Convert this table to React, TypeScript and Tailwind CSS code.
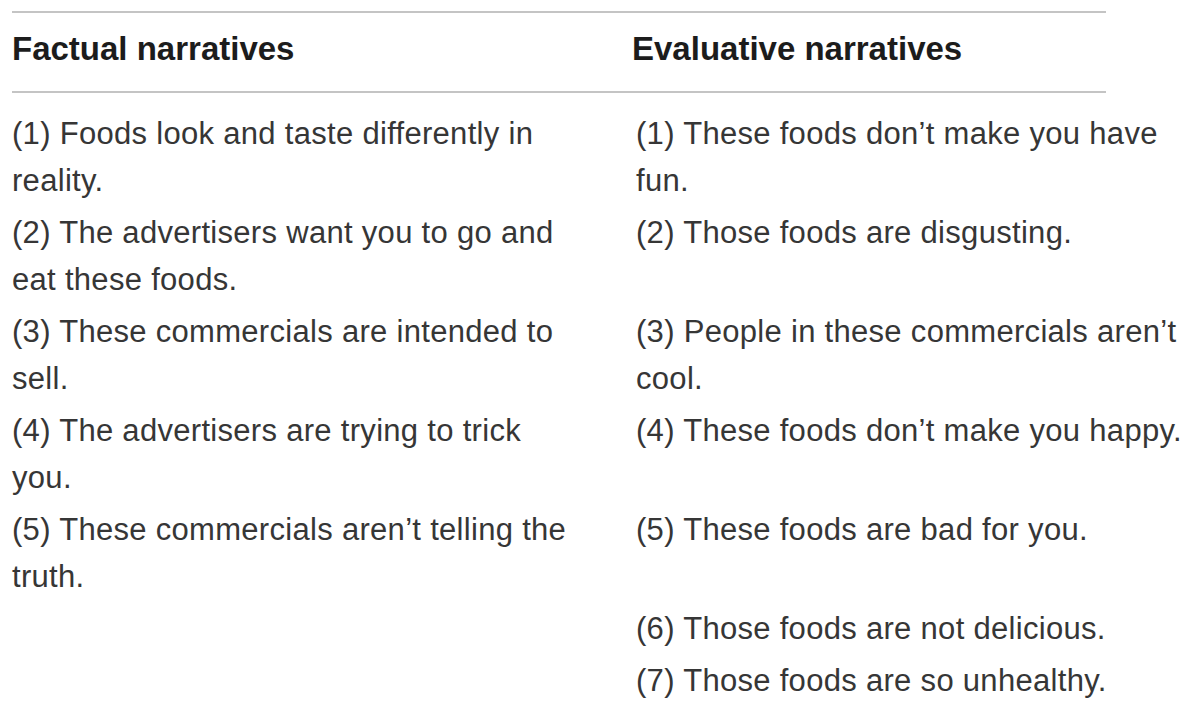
import React from 'react';

type Row = { left: string[]; right: string[] };

const rows: Row[] = [
  {
    left: ['(1) Foods look and taste differently in', 'reality.'],
    right: ['(1) These foods don’t make you have', 'fun.'],
  },
  {
    left: ['(2) The advertisers want you to go and', 'eat these foods.'],
    right: ['(2) Those foods are disgusting.'],
  },
  {
    left: ['(3) These commercials are intended to', 'sell.'],
    right: ['(3) People in these commercials aren’t', 'cool.'],
  },
  {
    left: ['(4) The advertisers are trying to trick', 'you.'],
    right: ['(4) These foods don’t make you happy.'],
  },
  {
    left: ['(5) These commercials aren’t telling the', 'truth.'],
    right: ['(5) These foods are bad for you.'],
  },
  { left: [], right: ['(6) Those foods are not delicious.'] },
  { left: [], right: ['(7) Those foods are so unhealthy.'] },
];

const Cell = ({ lines }: { lines: string[] }) => (
  <div className="whitespace-nowrap">
    {lines.map((l, i) => (
      <div key={i}>{l}</div>
    ))}
  </div>
);

export default function App() {
  return (
    <div className="w-[1200px] h-[711px] bg-white overflow-hidden pt-[11px] pl-[12px] font-['Liberation_Sans',Arial,sans-serif]">
      <div className="w-[1094px]">
        {/* Header */}
        <div className="flex border-t-2 border-b-2 border-[#c4c4c4] pt-[16px] pb-[22px] text-[33px] leading-[40px] font-bold text-[#1c1c1c]">
          <div className="w-[620px] shrink-0">Factual narratives</div>
          <div className="whitespace-nowrap">Evaluative narratives</div>
        </div>

        {/* Body */}
        <div className="pt-[14px] text-[31px] leading-[47px] tracking-[0.3px] text-[#363636]">
          {rows.map((r, i) => (
            <div key={i} className="flex py-[2.5px]">
              <div className="w-[624px] shrink-0">
                <Cell lines={r.left} />
              </div>
              <Cell lines={r.right} />
            </div>
          ))}
        </div>
      </div>
    </div>
  );
}
